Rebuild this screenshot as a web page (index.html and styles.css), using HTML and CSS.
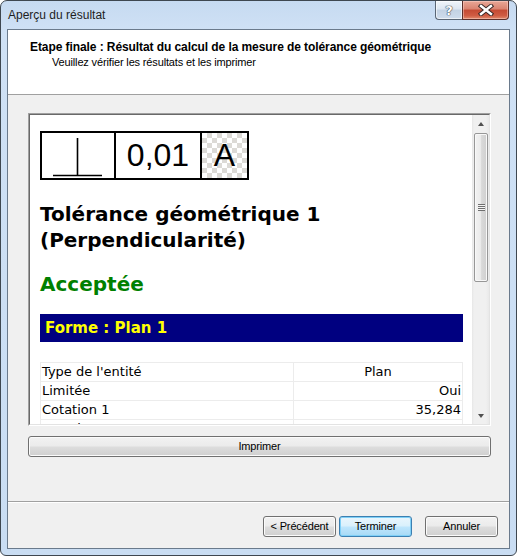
FILE: index.html
```html
<!DOCTYPE html>
<html lang="fr">
<head>
<meta charset="utf-8">
<title>Aperçu du résultat</title>
<link rel="stylesheet" href="styles.css">
</head>
<body>
<div class="window">
  <div class="titlebar">
    <span class="title">Aperçu du résultat</span>
    <div class="caption">
      <div class="cap-btn help"><span>?</span></div>
      <div class="cap-btn close">
        <svg width="16" height="12" viewBox="0 0 16 12">
          <path d="M3 2 L13 10 M13 2 L3 10" stroke="#3b2a28" stroke-width="4.4" stroke-linecap="square"/>
          <path d="M3 2 L13 10 M13 2 L3 10" stroke="#ffffff" stroke-width="2.4" stroke-linecap="square"/>
        </svg>
      </div>
    </div>
  </div>
  <div class="client">
    <div class="header">
      <div class="h-title">Etape finale : Résultat du calcul de la mesure de tolérance géométrique</div>
      <div class="h-sub">Veuillez vérifier les résultats et les imprimer</div>
    </div>
    <div class="body">
      <div class="preview">
        <div class="preview-inner">
          <div class="doc">
            <div class="fcf">
              <div class="fcf-cell sym">
                <svg width="72" height="45" viewBox="0 0 72 45">
                  <path d="M35.5 5 V43" stroke="#000" stroke-width="1.6"/>
                  <path d="M11 42.5 H60" stroke="#000" stroke-width="1.6"/>
                </svg>
              </div>
              <div class="fcf-cell val">0,01</div>
              <div class="fcf-cell datum">A</div>
            </div>
            <h1 class="doc-title">Tolérance géométrique 1 (Perpendicularité)</h1>
            <div class="status">Acceptée</div>
            <div class="band">Forme : Plan 1</div>
            <table class="props">
              <tr><td class="k">Type de l'entité</td><td class="v center">Plan</td></tr>
              <tr><td class="k">Limitée</td><td class="v">Oui</td></tr>
              <tr><td class="k">Cotation 1</td><td class="v">35,284</td></tr>
              <tr><td class="k">Cotation 2</td><td class="v"></td></tr>
            </table>
          </div>
          <div class="vscroll">
            <div class="sb-btn"><span class="arrow up"></span></div>
            <div class="sb-track">
              <div class="thumb"><span class="grip"></span></div>
            </div>
            <div class="sb-btn"><span class="arrow down"></span></div>
          </div>
        </div>
      </div>
      <button class="btn print">Imprimer</button>
    </div>
    <div class="footer">
      <button class="btn">&lt; Précédent</button>
      <button class="btn default">Terminer</button>
      <button class="btn cancel">Annuler</button>
    </div>
  </div>
</div>
</body>
</html>
```

FILE: styles.css
```css
* { box-sizing: border-box; }
html, body { margin: 0; padding: 0; background: #ffffff; }
body { width: 517px; height: 556px; overflow: hidden; font-family: "Liberation Sans", Arial, sans-serif; font-size: 12px; }

.window {
  width: 517px; height: 556px;
  border: 1px solid #3e4750;
  border-radius: 7px 7px 6px 6px;
  background: linear-gradient(180deg, #c6daf1 0%, #cfe1f5 30px, #c9ddf3 100%);
  display: flex; flex-direction: column;
  overflow: hidden;
}

.titlebar { height: 28px; display: flex; align-items: flex-start; flex: none; }
.title { padding: 7px 0 0 7px; font-size: 12px; color: #1e1e1e; line-height: 15px; }
.caption { margin-left: auto; margin-right: 7px; display: flex; }
.cap-btn { height: 19px; border: 1px solid #5a6675; border-top: none; display: flex; align-items: center; justify-content: center; }
.help {
  width: 27px; border-right: none; border-radius: 0 0 0 4px;
  background: linear-gradient(180deg, #f0f5fa 0%, #dce6f1 45%, #c3d2e3 50%, #cfdcec 100%);
  box-shadow: inset 0 0 0 1px rgba(255,255,255,0.6);
}
.help span { font: bold 13px "DejaVu Sans", sans-serif; color: #fff; line-height: 13px; text-shadow: 0 0 1px #3a4452, 0 0 1px #3a4452, 0 0 1px #3a4452; }
.close {
  width: 47px; border-color: #5b2f2a; border-radius: 0 0 4px 0;
  background: linear-gradient(180deg, #e8a797 0%, #d98370 45%, #c44a33 50%, #cf5b42 80%, #e08a6c 100%);
  box-shadow: inset 0 0 0 1px rgba(255,220,210,0.45);
}

.client {
  flex: 1; margin: 0 6px 6px 6px;
  border: 1px solid #6a7a8c;
  background: #f0f0f0;
  display: flex; flex-direction: column;
}

.header { height: 65px; background: #fff; border-bottom: 1px solid #a0a0a0; padding: 10px 0 0 22px; flex: none; }
.h-title { font-weight: bold; font-size: 12px; line-height: 15px; color: #000; letter-spacing: -0.08px; }
.h-sub { padding-left: 22px; font-size: 11px; letter-spacing: -0.15px; line-height: 15px; color: #000; }

.body { flex: 1; padding: 18px 18px 0 20px; display: flex; flex-direction: column; }

.preview { height: 313px; border: 1px solid; border-color: #a0a0a0 #ffffff #ffffff #a0a0a0; flex: none; }
.preview-inner { height: 100%; border: 1px solid; border-color: #696969 #e3e3e3 #e3e3e3 #696969; display: flex; background: #fff; }

.doc { flex: 1; overflow: hidden; padding: 16px 9px 0 10px; font-family: "DejaVu Sans", Verdana, sans-serif; color: #000; }

.fcf { display: flex; width: 209px; height: 49px; border: 2px solid #000; }
.fcf-cell { height: 45px; display: flex; align-items: center; justify-content: center; font-family: "Liberation Sans", Arial, sans-serif; font-size: 32px; }
.fcf-cell + .fcf-cell { border-left: 2px solid #000; }
.sym { width: 72px; }
.val { width: 86px; }
.datum {
  flex: 1;
  background-color: #ffffff;
  background-image: conic-gradient(#dcdad6 25%, #ffffff 0 50%, #dcdad6 0 75%, #ffffff 0);
  background-size: 10px 10px;
}

.doc-title { margin: 21px 0 0; font-size: 20px; line-height: 26px; font-weight: bold; }
.status { margin-top: 18px; font-size: 20px; line-height: 26px; font-weight: bold; color: #008000; }
.band { margin-top: 17px; height: 28px; background: #000080; color: #ffff00; font-weight: bold; font-size: 15px; line-height: 28px; padding-left: 5px; }

.props { margin-top: 20px; width: 100%; border-collapse: collapse; font-size: 13px; }
.props td { border: 1px solid #ececec; height: 19px; line-height: 18px; padding: 0 1px; white-space: nowrap; }
.props .k { width: 253px; }
.props .v { text-align: right; }
.props .center { text-align: center; }

.vscroll { width: 17px; display: flex; flex-direction: column; background: linear-gradient(90deg, #e6e6e6 0, #f0f0f0 2px, #f0f0f0 14px, #e9e9e9 17px); }
.sb-btn { height: 17px; display: flex; align-items: center; justify-content: center; flex: none; }
.sb-track { flex: 1; padding: 1px 1px 0 2px; }
.thumb {
  height: 149px; border: 1px solid #979797; border-radius: 2px;
  background: linear-gradient(90deg, #f2f2f2 0%, #ebebeb 45%, #d9d9d9 55%, #cfcfcf 100%);
  box-shadow: inset 0 0 0 1px #f8f8f8;
  display: flex; align-items: center; justify-content: center;
}
.grip { width: 7px; height: 7px; background: repeating-linear-gradient(180deg, #6f6f6f 0 1px, #f4f4f4 1px 2px); }
.arrow { width: 0; height: 0; border-left: 3.5px solid transparent; border-right: 3.5px solid transparent; }
.arrow.up { border-bottom: 4px solid #505050; margin-top: 1px; }
.arrow.down { border-top: 4px solid #505050; margin-top: 1px; }

.btn {
  font-family: "Liberation Sans", Arial, sans-serif; font-size: 11px; letter-spacing: -0.15px; color: #000;
  height: 21px; padding: 0; border: 1px solid #707070; border-radius: 3px;
  background: linear-gradient(180deg, #f2f2f2 0%, #ebebeb 48%, #dddddd 52%, #cfcfcf 100%);
  box-shadow: inset 0 0 0 1px #fbfbfb;
  line-height: 17px;
}
.print { margin-top: 10px; width: 463px; flex: none; }

.footer { height: 47px; border-top: 1px solid #a0a0a0; box-shadow: inset 0 1px 0 #ffffff; padding: 14px 11px 0 0; display: flex; justify-content: flex-end; gap: 3px; flex: none; }
.footer .btn { width: 73px; }
.footer .default {
  border-color: #3c7fb1;
  background: linear-gradient(180deg, #eaf6fd 0%, #d9f0fc 48%, #bee6fd 52%, #a7d9f5 100%);
  box-shadow: inset 0 0 0 1px #7fd0f7;
}
.footer .cancel { margin-left: 10px; }
```
